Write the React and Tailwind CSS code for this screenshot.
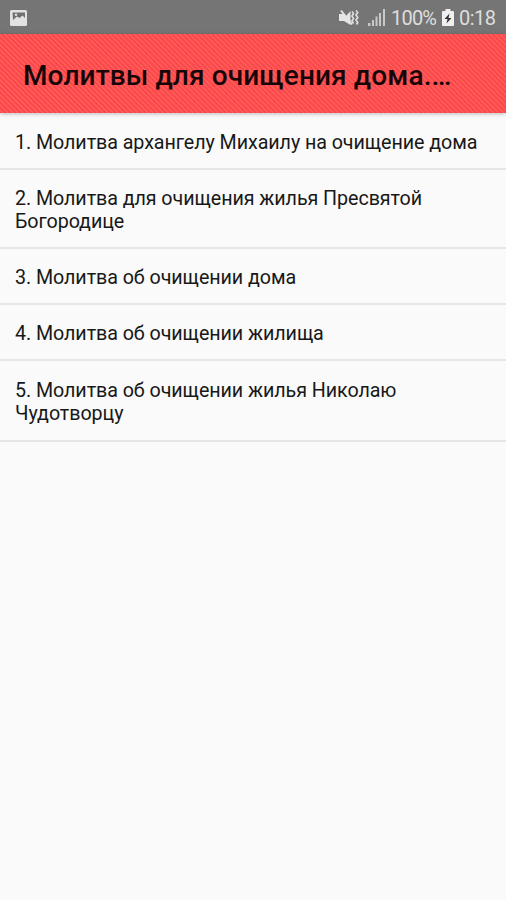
const prayers = [
  { id: 1, lines: ["1. Молитва архангелу Михаилу на очищение дома"], height: "h-[56px]" },
  { id: 2, lines: ["2. Молитва для очищения жилья Пресвятой", "Богородице"], height: "h-[79px]" },
  { id: 3, lines: ["3. Молитва об очищении дома"], height: "h-[56px]" },
  { id: 4, lines: ["4. Молитва об очищении жилища"], height: "h-[56px]" },
  { id: 5, lines: ["5. Молитва об очищении жилья Николаю", "Чудотворцу"], height: "h-[81px]" },
];

function PictureIcon() {
  return (
    <svg width="17" height="16" viewBox="0 0 17 16">
      <rect width="17" height="16" rx="1.5" fill="#e2e2e2" />
      <path d="M2.5 2.5h12.5v5.5l-2.5-2.500-3 2.500-2.500-1.500-4 3.500z" fill="#707070" />
      <circle cx="6" cy="4.7" r="1.2" fill="#e2e2e2" />
    </svg>
  );
}

function MutedVibrateIcon() {
  return (
    <svg width="20" height="17" viewBox="0 0 20 17">
      <path d="M0 5h5l2 2 4.500-5v14L5 12H0z" fill="#e4e4e4" />
      <path d="M2 1.500 13 15.500" stroke="#e4e4e4" strokeWidth="2" />
      <path d="m13 2.500 1.500 2L13 7l1.500 2.500L13 12l1.500 2.500M17 1.500l1.700 2L17 6l1.700 2.500L17 11l1.700 2.500-1.200 2" fill="none" stroke="#dedede" strokeWidth="1.7" />
    </svg>
  );
}

function SignalIcon() {
  return (
    <svg width="18" height="17" viewBox="0 0 18 17">
      <path d="M0 14h2.500v3H0zM4 11h2v6H4zM7.500 7.500h2V17h-2zM11 4h2v13h-2zM15 0h2v17h-2z" fill="#c8c8c8" />
    </svg>
  );
}

function BatteryIcon() {
  return (
    <svg width="12" height="17" viewBox="0 0 12 17">
      <path d="M3.500 0h5v2H11q1 0 1 1v13q0 1-1 1H1q-1 0-1-1V3q0-1 1-1h2.500z" fill="#f0f0f0" />
      <path d="M7.500 4.500 2.500 10h3L4.500 14.500l5-5.500h-3z" fill="#333" />
    </svg>
  );
}

export default function App() {
  return (
    <main className="flex h-[900px] w-[506px] flex-col overflow-hidden bg-[#fafafa] font-['Roboto',sans-serif] text-black">
      <div className="flex h-[34px] shrink-0 items-center bg-[#757575] pt-px pr-[11px] pl-[10px] text-[#dedede]">
        <PictureIcon />
        <div className="ml-auto flex items-center">
          <MutedVibrateIcon />
          <span className="ml-[9px]"><SignalIcon /></span>
          <span className="ml-[5px] w-[46px] pt-px text-[20px] leading-[32px] tracking-[-0.8px] whitespace-nowrap">100%</span>
          <span className="ml-[5px]"><BatteryIcon /></span>
          <span className="ml-[5px] w-[36px] pt-px text-[20px] leading-[32px] tracking-[-0.5px] whitespace-nowrap">0:18</span>
        </div>
      </div>
      <header className="relative flex h-[79px] shrink-0 items-center bg-[#fd4f50] bg-[repeating-linear-gradient(45deg,#fa4648_0px,#fd4b4c_1.400px,#ff6463_2.100px,#fa4648_3.540px)] pt-[4px] pl-[23px] shadow-[0_1px_4px_rgba(0,0,0,0.25)]">
        <h1 className="text-[28px] leading-[36px] font-medium tracking-[0.12px] whitespace-nowrap text-[#170608]">Молитвы для очищения дома.…</h1>
      </header>
      <ul className="pt-px">
        {prayers.map((prayer) => (
          <li key={prayer.id} className={`${prayer.height} flex flex-col justify-center border-b-2 border-[#e6e6e6] pt-[2px] pl-[15px] text-[19.7px] leading-[23px] tracking-[-0.07px] text-[#181818]`}>
            {prayer.lines.map((line) => (
              <span key={line} className="whitespace-nowrap">{line}</span>
            ))}
          </li>
        ))}
      </ul>
    </main>
  );
}
